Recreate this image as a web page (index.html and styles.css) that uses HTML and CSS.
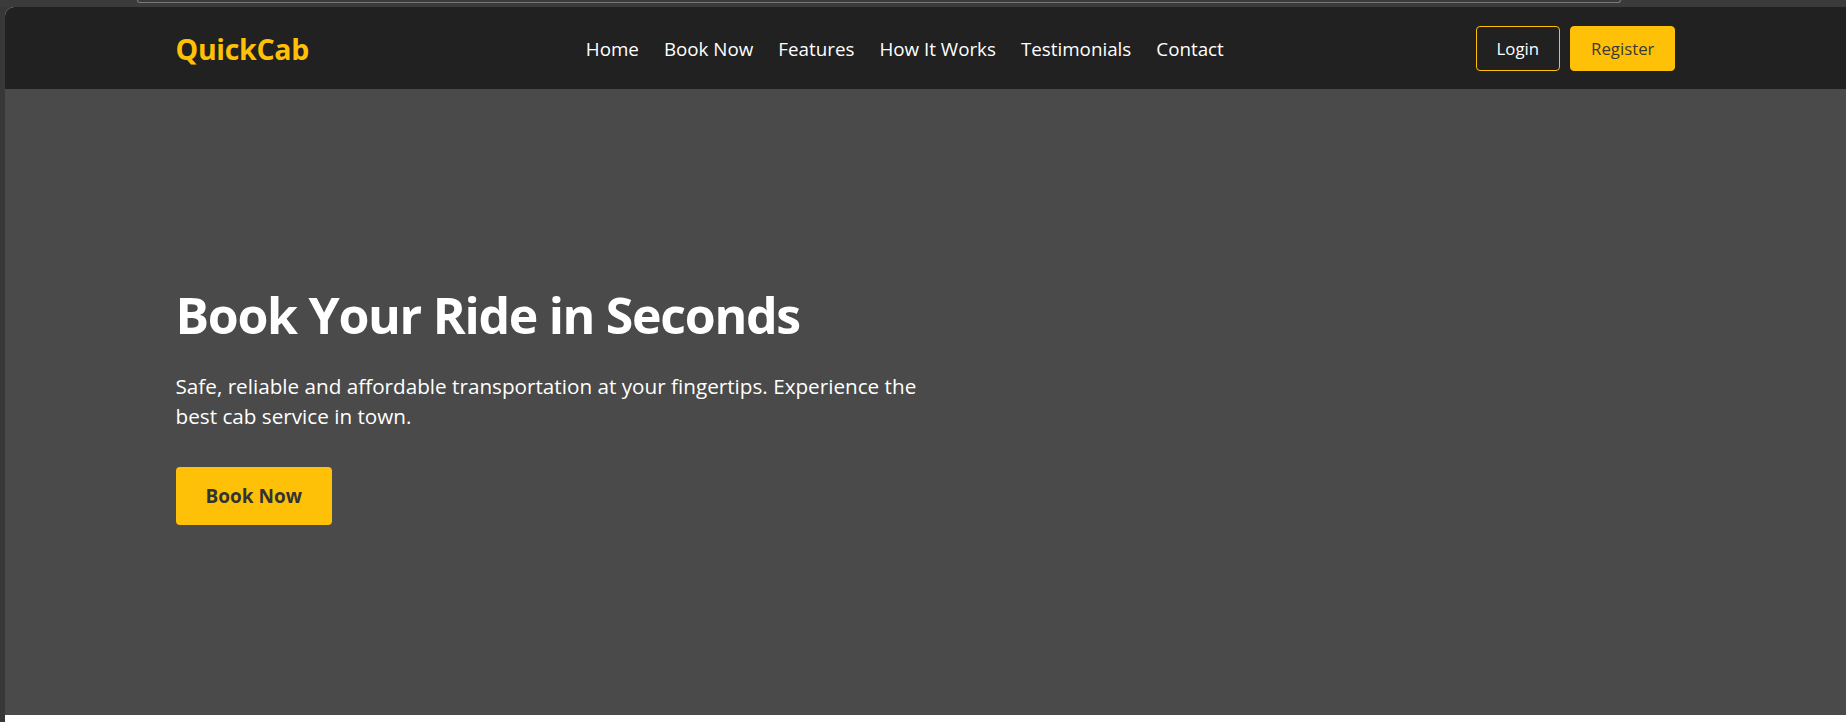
FILE: index.html
```html
<!DOCTYPE html>
<html lang="en">
<head>
<meta charset="utf-8">
<title>QuickCab</title>
<link rel="stylesheet" href="styles.css">
</head>
<body>
<div class="chrome-top"><div class="addr-edge"></div></div>
<div class="viewport">
  <header class="navbar">
    <div class="container nav-inner">
      <a class="logo" href="#">QuickCab</a>
      <ul class="nav-links">
        <li><a href="#">Home</a></li>
        <li><a href="#">Book Now</a></li>
        <li><a href="#">Features</a></li>
        <li><a href="#">How It Works</a></li>
        <li><a href="#">Testimonials</a></li>
        <li><a href="#">Contact</a></li>
      </ul>
      <div class="auth">
        <a class="btn btn-outline" href="#">Login</a>
        <a class="btn btn-fill" href="#">Register</a>
      </div>
    </div>
  </header>
  <section class="hero">
    <div class="container hero-inner">
      <h1 class="hero-title">Book Your Ride in Seconds</h1>
      <p class="hero-text">Safe, reliable and affordable transportation at your fingertips. Experience the best cab service in town.</p>
      <a class="btn-cta" href="#">Book Now</a>
    </div>
  </section>
</div>
</body>
</html>
```
FILE: styles.css
```css
* { box-sizing: border-box; }
html, body { margin: 0; padding: 0; }
body {
  background: #383838;
  font-family: "Open Sans", "Noto Sans", sans-serif;
  height: 722px;
  overflow: hidden;
}
a { text-decoration: none; }

.chrome-top {
  height: 7px;
  background: #3b3b3b;
  padding-left: 137px;
}
.addr-edge {
  width: 1484px;
  height: 3px;
  border: 1px solid #7a7a7a;
  border-top: none;
  border-radius: 0 0 6px 6px;
}

.viewport {
  margin-left: 5px;
  height: 715px;
  background: #ffffff;
  border-top-left-radius: 9px;
  overflow: hidden;
}

.container {
  max-width: 1500px;
  margin: 0 auto;
}

.navbar {
  height: 82px;
  background: #212121;
  display: flex;
  align-items: center;
}
.nav-inner {
  width: 100%;
  display: flex;
  align-items: center;
  justify-content: space-between;
  padding-top: 1px;
}
.logo {
  color: #ffc107;
  font-weight: 700;
  font-size: 28.5px;
  letter-spacing: -0.3px;
}
.nav-links {
  display: flex;
  list-style: none;
  margin: 0;
  padding: 0;
}
.nav-links li { margin-left: 25px; }
.nav-links a {
  color: #ffffff;
  font-size: 18.8px;
}
.auth {
  display: flex;
  gap: 10px;
}
.btn {
  display: inline-block;
  font-size: 16.8px;
  line-height: 21px;
  padding: 11px 20px;
  border-radius: 4px;
  border: 1px solid #ffc107;
}
.btn-outline { color: #ffffff; background: transparent; }
.btn-fill { color: #3a3a3a; background: #ffc107; }

.hero {
  height: 626px;
  background: #4a4a4a;
}
.hero-inner {
  padding-top: 196px;
}
.hero-title {
  color: #ffffff;
  font-size: 50px;
  font-weight: 700;
  line-height: 60px;
  margin: 0 0 27px;
  letter-spacing: -1.3px;
}
.hero-text {
  color: #ffffff;
  font-size: 20.7px;
  line-height: 29.5px;
  max-width: 770px;
  margin: 0 0 36px;
}
.btn-cta {
  display: inline-block;
  background: #ffc107;
  color: #333333;
  font-weight: 700;
  font-size: 19px;
  line-height: 24px;
  padding: 17px 30px;
  border-radius: 4px;
}
```
